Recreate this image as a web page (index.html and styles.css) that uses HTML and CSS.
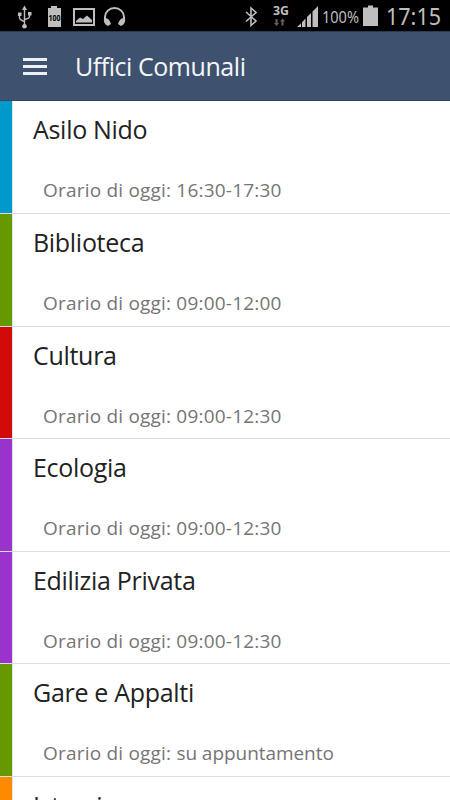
FILE: index.html
```html
<!DOCTYPE html>
<html lang="it">
<head>
<meta charset="utf-8">
<title>Uffici Comunali</title>
<link rel="stylesheet" href="styles.css">
</head>
<body>
<div class="status">
  <svg class="icons" width="130" height="31" viewBox="0 0 130 31">
    <g fill="none" stroke="#bebebe" stroke-width="1.4">
      <path d="M24.5 8V26M19.5 14V17.5Q19.5 20 24.5 21.5M29.5 14V16.500Q29.5 18.500 24.5 19.500"/>
      <rect x="74" y="9" width="20" height="16" stroke-width="2"/>
      <path d="M105 20V17A9.500 9 0 0 1 124 17V20" stroke-width="2"/>
    </g>
    <g fill="#bebebe">
      <path d="M24.5 5.500L27 10H22ZM18 12.500h3.500v3.500H18ZM28 12h3.500v3.500H28Z"/>
      <circle cx="24.500" cy="26.300" r="2.300"/>
      <path d="M48 8h3V6h6v2h4V27H48Z"/>
      <path d="M76 22.500V21L80 17.500L83 19L87 15.500L92 20V22.500Z"/>
      <path d="M104 18Q109 17 111 24L108 26Q103 24 104 18ZM125 18Q120 17 118 24L121 26Q126 24 125 18Z"/>
    </g>
    <text class="mini" x="48.500" y="21" textLength="12" lengthAdjust="spacingAndGlyphs">100</text>
  </svg>
  <svg class="icons" width="210" height="31" viewBox="240 0 210 31">
    <path d="M246 12L256 21L251 25.500V8L256 12.500L246 21.500" fill="none" stroke="#bebebe" stroke-width="1.600"/>
    <text class="net" x="273" y="15" textLength="16" lengthAdjust="spacingAndGlyphs">3G</text>
    <path d="M275.500 19h2v4h1.600L276.500 26L274 23h1.500ZM281.500 25.500h2v-4h1.600L282.500 18.500L280 21.500h1.500Z" fill="#606060"/>
    <path d="M297 27L301 23.300V27ZM302 22.300L305.500 18.500V27H302ZM307 17L311 13V27H307ZM312.500 11.500L318 6V27H312.500Z" fill="#bebebe"/>
    <text class="percent" x="322" y="23" textLength="37" lengthAdjust="spacingAndGlyphs">100%</text>
    <path d="M363 7.500h5V5.500h5v2h5V26H363Z" fill="#bebebe"/>
    <text class="clock" x="386" y="24.500" textLength="55" lengthAdjust="spacingAndGlyphs">17:15</text>
  </svg>
</div>
<header class="bar">
  <span class="menu"><i></i><i></i><i></i></span>
  <h1>Uffici Comunali</h1>
</header>
<main class="list">
  <section class="row blue"><div class="text"><h2>Asilo Nido</h2><p>Orario di oggi: 16:30-17:30</p></div></section>
  <section class="row green"><div class="text"><h2>Biblioteca</h2><p>Orario di oggi: 09:00-12:00</p></div></section>
  <section class="row red"><div class="text"><h2>Cultura</h2><p>Orario di oggi: 09:00-12:30</p></div></section>
  <section class="row purple"><div class="text"><h2>Ecologia</h2><p>Orario di oggi: 09:00-12:30</p></div></section>
  <section class="row purple"><div class="text"><h2>Edilizia Privata</h2><p>Orario di oggi: 09:00-12:30</p></div></section>
  <section class="row green"><div class="text"><h2>Gare e Appalti</h2><p>Orario di oggi: <span class="note">su appuntamento</span></p></div></section>
  <section class="row orange"><div class="text"><h2>Istruzione</h2></div></section>
</main>
</body>
</html>
```
FILE: styles.css
```css
* { box-sizing: border-box; margin: 0; }
html { overflow: hidden; }
body { width: 450px; height: 800px; overflow: hidden; background: #fff; font-family: "Open Sans", "Noto Sans", sans-serif; display: flex; flex-direction: column; }
.status { height: 31px; flex: none; background: #000; display: flex; justify-content: space-between; }
.icons { display: block; }
.mini { font: 700 9px "Noto Sans", sans-serif; fill: #000; }
.net { font: 700 13px "Noto Sans", sans-serif; fill: #bebebe; }
.percent { font: 16px "Noto Sans", sans-serif; fill: #bebebe; }
.clock { font: 23px "Noto Sans", sans-serif; fill: #bebebe; }
.bar { height: 70px; flex: none; background: #3e5270; border-top: 1px solid #2b3b52; border-bottom: 1px solid #344869; display: flex; align-items: center; padding-left: 23px; }
.menu { width: 24px; display: flex; flex-direction: column; gap: 4px; padding-top: 1px; }
.menu i { height: 3px; background: #eceef1; }
h1 { margin-left: 28px; font-size: 25px; font-weight: 400; line-height: 34px; letter-spacing: -0.45px; color: #f5f6f8; white-space: nowrap; }
.list { flex: 1; min-height: 0; overflow: hidden; }
.row { height: 112.5px; display: flex; border-bottom: 1px solid #d9dee4; white-space: nowrap; }
.row:first-child { height: 113px; }
.row::before { content: ""; width: 12px; flex: none; background: currentColor; }
.text { flex: 1; border-left: 1px solid #dde5ec; padding: 11px 0 0 20px; }
.blue { color: #0099cc; }
.green { color: #669900; }
.red { color: #d20a0a; }
.purple { color: #9933cc; }
.orange { color: #ff8a00; }
h2 { font-size: 25px; font-weight: 400; line-height: 34px; letter-spacing: -0.3px; color: #222; }
p { margin: 30px 0 0 10px; font-size: 19px; line-height: 28px; letter-spacing: 0.2px; color: #757575; }
.note { letter-spacing: -0.05px; }
```
